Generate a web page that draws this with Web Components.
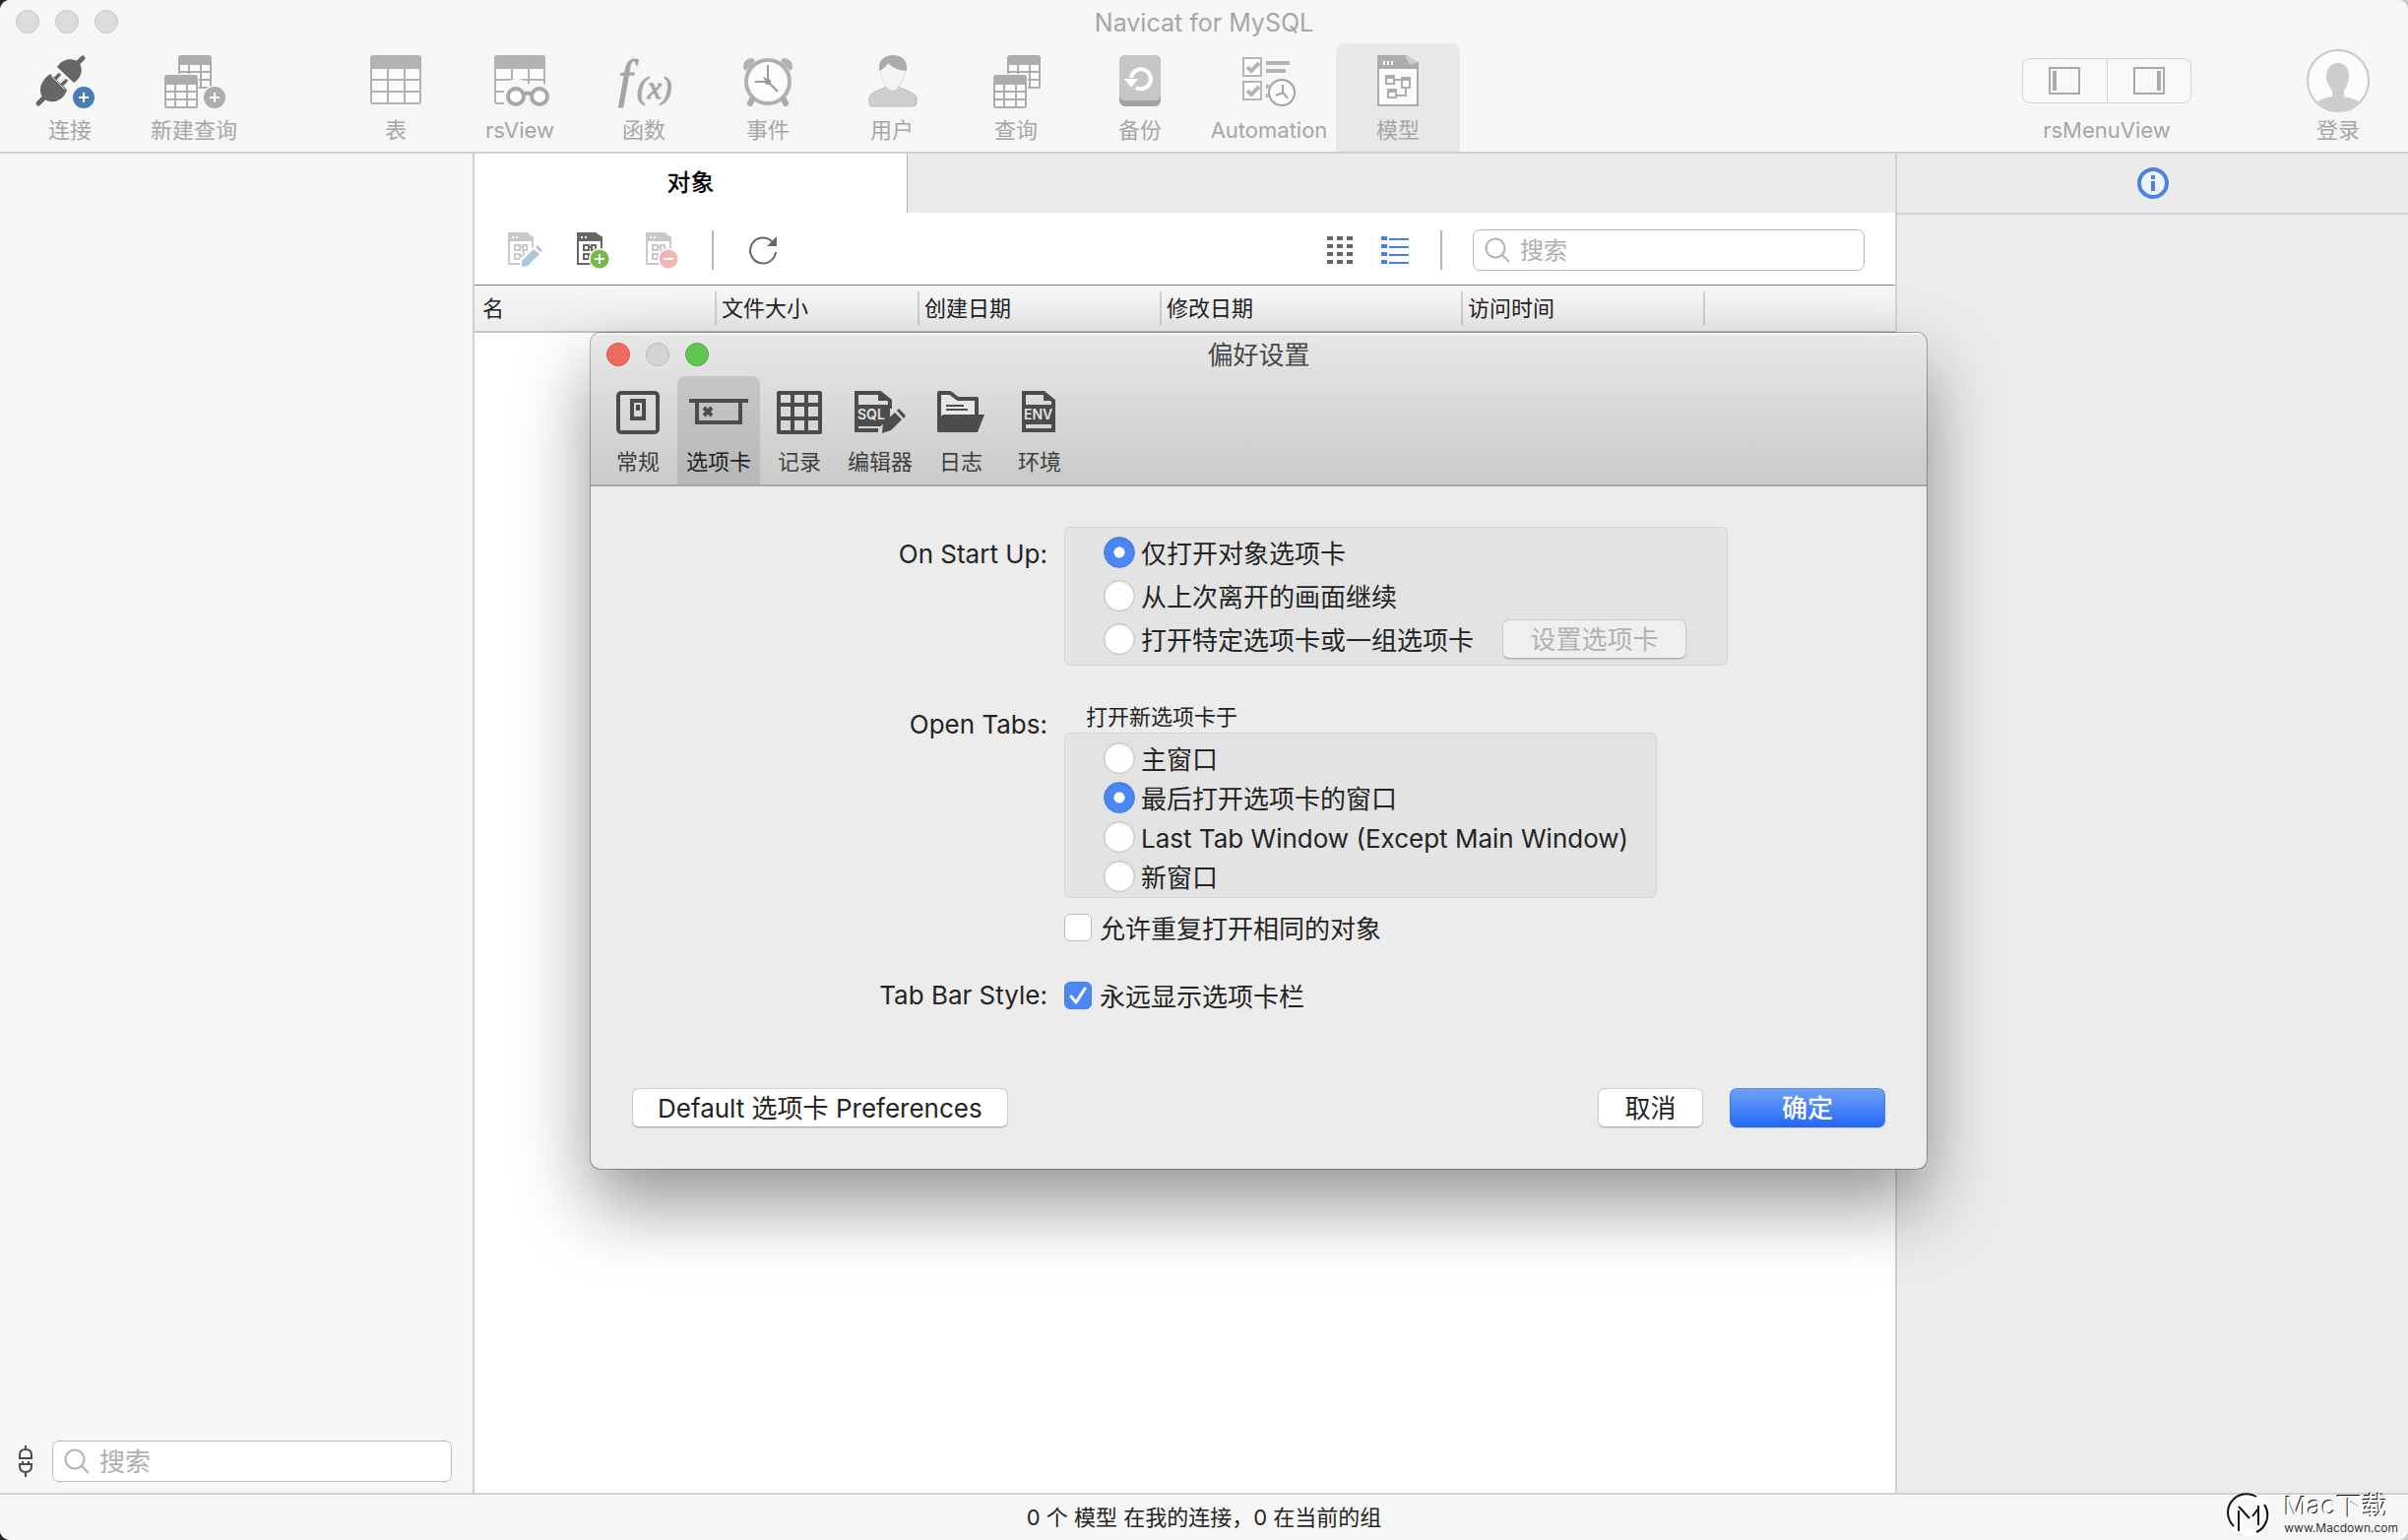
<!DOCTYPE html>
<html lang="zh-CN">
<head>
<meta charset="utf-8">
<title>Navicat for MySQL</title>
<style>
html, body { height: 100%; margin: 0; }
body {
  background: linear-gradient(90deg, #2a2024, #c9c9c9);
  font: 22px/28px Inter, "Noto Sans CJK SC", sans-serif;
  color: #242424;
}
</style>
</head>
<body>
<app-window></app-window>
<script>
const smallTable = (x, y) => `<g transform="translate(${x} ${y})"><rect width="34" height="34" rx="3" fill="#adadad"/><path fill="#fcfcfc" d="M2 10h8v6H2zM12 10h10v6H12zM24 10h8v6h-8zM2 18h8v6H2zM12 18h10v6H12zM24 18h8v6h-8zM2 26h8v6H2zM12 26h10v6H12zM24 26h8v6h-8z"/></g>`;
const doc = (c, extra) => `<path fill="#fff" stroke="${c}" stroke-width="2" d="M1 5h24v27H1z"/><path fill="${c}" d="M0 0h19l7 5v4H0z"/><path fill="#fff" d="M4 4h2v2H4zM8 4h2v2H8z"/><path fill="none" stroke="${c}" stroke-width="2" d="M7 13h5v5H7zM15 13h4v5h-4zM7 22h5v5H7zM12 15h3M12 24h4v-6"/>${extra}`;
const ICONS = {
  plug: [80, 52, `<g fill="#666" stroke="#666"><path stroke="none" d="M20 19L37 35C34 46 22 51 13 44C7 36 10 26 20 19Z"/><path stroke="none" d="M27 12C32 4 42 2 49 7C54 14 52 23 44 28Z"/><path stroke-width="5" stroke-linecap="round" d="M14 43L8 49M49 7L53 3"/><path stroke-width="3.5" stroke-linecap="round" d="M24 25L29 20M31 31L36 26"/></g><path stroke="#ddd" stroke-width="1" d="M21 21L35 35"/><circle cx="54" cy="43" r="11" fill="#4a7db5"/><path stroke="#fff" stroke-width="2" d="M49 43h10M54 38v10"/>`],
  newquery: [80, 52, smallTable(24, 0) + `<path fill="#f6f6f6" d="M9 19h36v35H9z"/>` + smallTable(10, 20) + `<circle cx="61" cy="43" r="12.5" fill="#f6f6f6"/><circle cx="61" cy="43" r="11" fill="#adadad"/><path stroke="#fff" stroke-width="2" d="M56 43h10M61 38v10"/>`],
  query: [80, 52, smallTable(31, 0) + `<path fill="#f6f6f6" d="M16 19h36v35H16z"/>` + smallTable(17, 20)],
  table: [80, 52, `<rect x="14" width="52" height="50" rx="3" fill="#b2b2b2"/><path fill="#fbfbfb" d="M16 14h15v10H16zM33 14h15v10H33zM50 14h14v10H50zM16 26h15v10H16zM33 26h15v10H33zM50 26h14v10H50zM16 38h15v10H16zM33 38h15v10H33zM50 38h14v10H50z"/>`],
  view: [80, 52, `<rect x="14" width="52" height="50" rx="3" fill="#b2b2b2"/><path fill="#fbfbfb" d="M16 14h15v10H16zM33 14h15v10H33zM50 14h14v10H50zM16 26h15v10H16zM33 26h15v10H33zM50 26h14v10H50zM16 38h15v10H16z"/><path fill="#f6f6f6" d="M24 36a13 13 0 0 1 24-6a13 13 0 0 1 18 0h6v22H24z"/><g fill="#fcfcfc" stroke="#a8a8a8" stroke-width="4"><circle cx="36" cy="42" r="8"/><circle cx="60" cy="42" r="8"/><path d="M44 40q4-3 8 0"/></g>`],
  func: [80, 52, `<text x="14" y="42" font-family="Liberation Serif" font-style="italic" font-size="52" fill="#a5a5a5" stroke="#a5a5a5" stroke-width="1">f</text><text x="33" y="44" font-family="Liberation Serif" font-style="italic" font-size="32" fill="#a5a5a5" stroke="#a5a5a5" stroke-width="1">(x)</text>`],
  clock: [80, 52, `<g fill="#b3b3b3"><path d="M15 13a9 9 0 0 1 10-10l2 3L17 16zM65 13A9 9 0 0 0 55 3l-2 3L63 16z"/><path stroke="#aaa" stroke-width="6" stroke-linecap="round" d="M25 43l-3 6M55 43l3 6"/></g><circle cx="40" cy="27" r="22" fill="#fdfdfd" stroke="#b0b0b0" stroke-width="4"/><path fill="none" stroke="#999" stroke-width="2" d="M40 10v17H27M36 23l14 14"/><circle cx="40" cy="27" r="3" fill="#999"/>`],
  user: [80, 52, `<path fill="#cfcfcf" stroke="#bbb" d="M17 50V43Q18 38 31 34L34 32H47L50 34Q63 38 65 43V50Q64 52 61 52H21Q17 52 17 50Z"/><path fill="#f4f4f4" stroke="#ddd" d="M29 14C28 24 33 31 35 33Q41 39 46 33C50 28 54 20 53 14L40 7Z"/><path fill="#ababab" d="M27 16C26 5 32 0 41 0C51 0 56 6 55 16Q44 16 36 8Q32 14 27 16Z"/>`],
  backup: [80, 52, `<rect x="19" width="42" height="52" rx="6" fill="#a3a3a3"/><rect x="19" width="42" height="46" rx="6" fill="#c6c6c6"/><path fill="none" stroke="#fff" stroke-width="4" d="M31 23A10 10 0 1 1 36 33"/><path fill="#fff" d="M24 24h14l-7 9z"/>`],
  auto: [80, 52, `<g fill="none" stroke="#b5b5b5" stroke-width="2"><path fill="#fff" d="M14 3h18v18H14zM14 27h18v18H14z"/><path stroke-width="4" d="M18 12l4 4 8-8M18 36l4 4 8-8M37 8h24M37 16h20M37 32h8M37 41h4"/></g><circle cx="53" cy="38" r="14.5" fill="#f6f6f6"/><circle cx="53" cy="38" r="13" fill="#fbfbfb" stroke="#a3a3a3" stroke-width="2"/><path fill="none" stroke="#a3a3a3" stroke-width="2" d="M54 30v8l-7 3M54 38l5 6"/>`],
  model: [80, 52, `<path fill="#fdfdfd" stroke="#acacac" stroke-width="2" d="M20 8h40v43H20z"/><path fill="#acacac" d="M19 0h30l12 9v5H19z"/><path fill="#ccc" d="M47 0l14 7-9 3z"/><path fill="#fff" d="M25 6h2v4h-2zM29 6h2v4h-2zM33 6h2v4h-2z"/><path fill="none" stroke="#acacac" stroke-width="2" d="M28 21h8v8h-8zM44 23h8v10h-8zM30 35h8v8h-8zM36 25h8M38 41h10v-8"/><path stroke="#acacac" stroke-width="4" d="M27 22h10M43 24h10M29 36h10"/>`],
  sideLeft: [32, 28, `<path fill="none" stroke="#aaa" stroke-width="2" d="M1 1h30v26H1z"/><path fill="#aaa" d="M4 4h4v20H4z"/>`],
  sideRight: [32, 28, `<path fill="none" stroke="#aaa" stroke-width="2" d="M1 1h30v26H1z"/><path fill="#aaa" d="M24 4h4v20h-4z"/>`],
  login: [64, 64, `<circle cx="32" cy="32" r="31" fill="#fcfcfc" stroke="#c8c8c8" stroke-width="2"/><path fill="#cdcdcd" d="M11 53Q16 50 26 48V42Q22 37 21 33Q19 30 20 27Q21 15 31 14Q42 14 43 26Q44 29 42 33Q41 38 38 42V48Q48 50 53 53Q44 63 32 63T11 53Z"/>`],
  info: [32, 32, `<circle cx="16" cy="16" r="14" fill="#eef3fb" stroke="#4d82e3" stroke-width="4"/><path fill="#4d82e3" d="M14 8h4v4h-4zM14 14h4v10h-4z"/>`],
  docEdit: [36, 36, `<g opacity=".35">${doc('#666', '')}</g><path fill="#fff" d="M12 27L30 11 36 19 22 36H12z"/><path fill="#aec6de" d="M14 29L26 17l6 5-12 12-6 1zM28 15l2-2 5 5-2 2z"/>`],
  docAdd: [36, 36, doc('#666', '<circle cx="23" cy="27" r="11" fill="#fff"/><circle cx="23" cy="27" r="9.5" fill="#76b947"/><path stroke="#fff" stroke-width="2" d="M18 27h10M23 22v10"/>')],
  docRemove: [36, 36, `<g opacity=".35">${doc('#666', '')}</g><circle cx="23" cy="27" r="11" fill="#fff"/><circle cx="23" cy="27" r="9.5" fill="#f3b5b3"/><path stroke="#fff" stroke-width="2" d="M18 27h10"/>`],
  refresh: [30, 30, `<path fill="none" stroke="#666" stroke-width="2" d="M28 17A13 13 0 1 1 24 6"/><path fill="#666" d="M29 1v10H19z"/>`],
  grid: [28, 28, `<path fill="none" stroke="#666" stroke-width="4" stroke-dasharray="6 4" d="M0 2h27M0 10h27M0 18h27M0 26h27"/>`],
  list: [28, 28, `<path fill="#4a80dd" d="M0 0h6v4H0zM8 2h20v2H8zM0 8h6v4H0zM8 10h20v2H8zM0 16h6v4H0zM8 18h20v2H8zM0 24h6v4H0zM8 26h20v2H8z"/>`],
  search: [26, 26, `<g fill="none" stroke="#b2b2b2" stroke-width="2"><circle cx="11" cy="11" r="9.5"/><path d="M18 18l7 7"/></g>`],
  link: [16, 32, `<path fill="none" stroke="#4a4a4a" stroke-width="2" d="M8 0v4M2 13V10Q2 4 8 4T14 10V13ZM1 19H15M2 19V21Q2 27 8 27T14 21V19M8 27V32M5 16v3M11 16v3"/>`],
  general: [60, 48, `<rect x="10" y="4" width="40" height="40" rx="3" fill="none" stroke="#4c4c4c" stroke-width="4"/><path fill="none" stroke="#4c4c4c" stroke-width="4" d="M24 12h12v18H24z"/><path fill="#4c4c4c" d="M28 16h4v6h-4z"/>`],
  tabs: [60, 48, `<path fill="none" stroke="#4c4c4c" stroke-width="4" d="M0 12h60M8 12v22h44V12M15 19l8 8M23 19l-8 8"/>`],
  records: [60, 48, `<path fill="none" stroke="#4c4c4c" stroke-width="4" stroke-linejoin="round" d="M9 4h42v40H9zM9 16h42M9 30h42M23 4v40M37 4v40"/>`],
  sql: [60, 48, `<path fill="none" stroke="#4c4c4c" stroke-width="4" d="M6 18V4h24l10 8v8M6 36v6h22"/><path fill="#4c4c4c" d="M28 2l12 10H28zM4 16h36v14L32 38H4z"/><text x="7" y="31" font-size="14" font-weight="600" fill="#e4e4e4">SQL</text><path stroke="#d6d6d6" stroke-width="14" d="M34 44L50 30"/><path fill="#4c4c4c" d="M33 35L45 24l7 7-11 11-9 3zM47 22l2-2 7 7-2 3z"/>`],
  log: [60, 48, `<path fill="#e6e6e6" stroke="#4c4c4c" stroke-width="4" stroke-linejoin="round" d="M8 42V4h11l8 6h19v18"/><path fill="#4c4c4c" d="M6 44l4-16q1-2 3-2h41l-7 18z"/><path stroke="#4c4c4c" stroke-width="2" d="M15 17h18M15 21h22"/>`],
  env: [60, 48, `<path fill="none" stroke="#4c4c4c" stroke-width="4" d="M14 18V4h20l10 8v8M14 34v8h30v-8"/><path fill="#4c4c4c" d="M34 2l12 10H34zM12 16h34v20H12z"/><text x="14" y="31" font-size="14" font-weight="600" fill="#e4e4e4">ENV</text>`]
};

const RESET = `*{box-sizing:border-box}button{font:inherit;color:inherit;background:none;border:0;padding:0;margin:0}`;

function define(name, css, html) {
  const template = document.createElement('template');
  customElements.define(name, class extends HTMLElement {
    constructor() {
      super();
      template.innerHTML ||= `<style>${RESET}${css}</style>${html}`;
      this.attachShadow({ mode: 'open' }).append(template.content.cloneNode(true));
    }
  });
}

customElements.define('ui-icon', class extends HTMLElement {
  connectedCallback() {
    if (this.shadowRoot) return;
    const [w, h, body] = ICONS[this.getAttribute('name')];
    this.attachShadow({ mode: 'open' }).innerHTML =
      `<style>:host{display:block;flex:none}svg{display:block;overflow:visible}</style><svg width="${w}" height="${h}" viewBox="0 0 ${w} ${h}" aria-hidden="true">${body}</svg>`;
  }
});

/* Toolbar entry: picture above, caption below */
define('tool-item', `
:host{display:block;min-width:126px}
:host([wide]){min-width:136px}
button{display:flex;flex-direction:column;align-items:center;width:100%;height:110px;color:#a6a6a6;line-height:24px;white-space:nowrap}
.art{height:76px;display:flex;align-items:center}
:host([selected]) button{background:#e8e8e8;border-radius:8px 8px 0 0}
`, `<button type="button"><span class="art"><slot name="icon"></slot></span><slot></slot></button>`);

define('view-switch', `
:host{display:flex;flex-direction:column;align-items:center;height:110px;color:#a6a6a6;line-height:24px}
.art{height:76px;display:flex;align-items:center}
.seg{display:flex;border:1px solid #d4d4d4;border-radius:8px;height:46px;width:172px;background:#f8f8f8}
button{flex:1;display:grid;place-items:center}
button+button{border-left:1px solid #d4d4d4}
`, `<div class="art"><div class="seg"><button type="button" aria-label="左侧栏"><ui-icon name="sideLeft"></ui-icon></button><button type="button" aria-label="右侧栏"><ui-icon name="sideRight"></ui-icon></button></div></div><slot></slot>`);

define('traffic-lights', `
:host{display:flex;gap:16px}
button{width:24px;height:24px;border-radius:50%;background:#dcdcdc;border:1px solid #c6c6c6}
:host([active]) button{background:#d4d4d4;border-color:#b8b8b8}
:host([active]) .close{background:#ed6a5f;border-color:#d5564c}
:host([active]) .zoom{background:#62c554;border-color:#51a844}
`, `<button class="close" type="button" aria-label="关闭"></button><button type="button" aria-label="最小化"></button><button class="zoom" type="button" aria-label="缩放"></button>`);

define('title-bar', `
:host{display:grid;grid-template-columns:1fr auto 1fr;align-items:center;height:44px;padding:0 16px}
.text{padding-top:2px}
`, `<slot name="lights"></slot><span class="text"><slot></slot></span>`);

define('main-toolbar', `
:host{display:block;height:156px;background:#f6f6f6;border-bottom:2px solid #d0d0d0;color:#a6a6a6}
title-bar{font-size:25px}
.row{display:flex;padding:0 8px}
.gap{width:79px}.fill{flex:1}
view-switch{margin-right:86px}
`, `<title-bar><traffic-lights slot="lights"></traffic-lights>Navicat for MySQL</title-bar>
<div class="row">
<tool-item><ui-icon slot="icon" name="plug"></ui-icon>连接</tool-item>
<tool-item><ui-icon slot="icon" name="newquery"></ui-icon>新建查询</tool-item>
<span class="gap"></span>
<tool-item><ui-icon slot="icon" name="table"></ui-icon>表</tool-item>
<tool-item><ui-icon slot="icon" name="view"></ui-icon>rsView</tool-item>
<tool-item><ui-icon slot="icon" name="func"></ui-icon>函数</tool-item>
<tool-item><ui-icon slot="icon" name="clock"></ui-icon>事件</tool-item>
<tool-item><ui-icon slot="icon" name="user"></ui-icon>用户</tool-item>
<tool-item><ui-icon slot="icon" name="query"></ui-icon>查询</tool-item>
<tool-item><ui-icon slot="icon" name="backup"></ui-icon>备份</tool-item>
<tool-item wide><ui-icon slot="icon" name="auto"></ui-icon>Automation</tool-item>
<tool-item selected><ui-icon slot="icon" name="model"></ui-icon>模型</tool-item>
<span class="fill"></span>
<view-switch>rsMenuView</view-switch>
<tool-item><ui-icon slot="icon" name="login"></ui-icon>登录</tool-item>
</div>`);

define('search-field', `
:host{display:block;min-width:0;font-size:26px}
label{display:flex;align-items:center;gap:10px;height:42px;padding:0 11px;background:#fff;border:1px solid #b9b9b9;border-radius:7px}
input{flex:1;min-width:0;border:0;outline:0;padding:2px 0 0;background:none;font:inherit;color:#242424}
input::placeholder{color:#b0b0b0;opacity:1}
`, `<label><ui-icon name="search"></ui-icon><input type="text" placeholder="搜索" aria-label="搜索"></label>`);

define('side-bar', `
:host{display:flex;align-items:flex-end;min-width:0;background:#f6f6f6;border-right:2px solid #d0d0d0}
.foot{flex:1;min-width:0;display:flex;align-items:center;gap:19px;padding:0 21px 11px 18px}
search-field{flex:1}
`, `<div class="foot"><ui-icon name="link"></ui-icon><search-field></search-field></div>`);

define('object-pane', `
:host{display:flex;flex-direction:column;background:#fff;min-width:0}
.tabs{display:flex;height:60px;background:#ebebeb}
.tab{width:440px;background:#fff;border-right:1px solid #b4b4b4;font-size:24px;font-weight:500;color:#000}
.bar{display:flex;align-items:center;height:73px;padding:2px 31px 0 34px}
.make,.look{display:flex;align-items:center;gap:34px}
.look{gap:27px;margin:0 32px 0 auto}
.bar i{width:2px;height:40px;background:#b4b4b4}
.make+i{margin:0 35px 0 31px}
.look+i{margin-right:31px}
search-field{width:398px;font-size:24px}
table{width:100%;table-layout:fixed;border-collapse:collapse;border-top:1px solid #7f7f7f;border-bottom:2px solid #c4c4c4;background:linear-gradient(#f7f7f7,#ececec)}
th{height:47px;padding:0;font-weight:400;text-align:left;color:#222}
th span{display:block;height:34px;line-height:34px;padding-left:5px;border-right:2px solid #cfcfcf}
th:first-child span{padding-left:8px}
th:last-child span{border:0}
`, `<div class="tabs"><button class="tab" type="button">对象</button></div>
<div class="bar">
<div class="make">
<button type="button" aria-label="设计模型"><ui-icon name="docEdit"></ui-icon></button>
<button type="button" aria-label="新建模型"><ui-icon name="docAdd"></ui-icon></button>
<button type="button" aria-label="删除模型"><ui-icon name="docRemove"></ui-icon></button>
</div>
<i></i>
<button type="button" aria-label="刷新"><ui-icon name="refresh"></ui-icon></button>
<div class="look">
<button type="button" aria-label="图标视图"><ui-icon name="grid"></ui-icon></button>
<button type="button" aria-label="列表视图"><ui-icon name="list"></ui-icon></button>
</div>
<i></i>
<search-field></search-field>
</div>
<table><colgroup><col style="width:246px"><col style="width:206px"><col style="width:246px"><col style="width:306px"><col style="width:246px"><col></colgroup>
<thead><tr><th><span>名</span></th><th><span>文件大小</span></th><th><span>创建日期</span></th><th><span>修改日期</span></th><th><span>访问时间</span></th><th><span></span></th></tr></thead></table>`);

define('info-pane', `
:host{display:block;background:#ececec;border-left:2px solid #d2d2d2}
header{display:grid;place-items:center;height:62px;background:#ebebeb;border-bottom:2px solid #d2d2d2}
`, `<header><button type="button" aria-label="信息"><ui-icon name="info"></ui-icon></button></header>`);

define('status-bar', `
:host{display:grid;place-items:center;height:48px;border-top:2px solid #d0d0d0;background:#f6f6f6}
`, `<slot></slot>`);

define('site-mark', `
:host{display:flex;align-items:center;gap:14px;color:#fff}
svg{display:block}
.name{font-size:26px;line-height:28px;text-shadow:-1px -1px 0 #111}
.url{font-size:12px;line-height:16px;color:#333}
`, `<svg width="44" height="44" viewBox="0 0 44 44" aria-hidden="true"><g fill="none"><path stroke="#fff" stroke-width="6" d="M22 3a19 19 0 1 0 1 0"/><path stroke="#111" stroke-width="2" d="M30 4A19 19 0 0 0 7 34M38 12A19 19 0 0 1 30 40"/><path stroke="#fff" stroke-width="5" d="M14 36V14l10 12 10-12v18"/><path stroke="#111" stroke-width="2" d="M12 39V18M12 14l11 12M26 24l6-8M32 13v20"/></g></svg>
<div><div class="name">Mac下载</div><div class="url">www.Macdown.com</div></div>`);

define('pref-tab', `
:host{display:block}
button{display:flex;flex-direction:column;align-items:center;min-width:80px;height:110px;padding:13px 9px 0;gap:12px;line-height:28px;color:#404040}
:host([selected]) button{background:linear-gradient(#c6c6c6,#b8b8b8);border-radius:8px 8px 0 0;color:#222}
`, `<button type="button"><slot name="icon"></slot><slot></slot></button>`);

define('pref-row', `
:host{display:grid;grid-template-columns:464px 1fr;column-gap:17px;font-size:26px;line-height:32px}
.cap{text-align:right}
:host([drop="box"]) .cap{padding-top:12px}
:host([drop="title"]) .cap{padding-top:7px}
`, `<div class="cap"><slot name="caption"></slot></div><div><slot></slot></div>`);

define('push-button', `
:host{display:inline-block;font-size:26px}
button{height:40px;line-height:38px;padding:1px 25px 0;width:100%;white-space:nowrap;background:#fff;border-radius:7px;border:1px solid #cdcdcd;border-bottom-color:#b0b0b0;box-shadow:0 1px 1px rgba(0,0,0,.12);color:#242424}
:host([primary]) button{color:#fff;font-weight:500;border-color:#5a8fee #3c78ef #2a62e0;background:linear-gradient(#6ea1f5,#2568f6)}
:host([disabled]) button{color:#b2b2b2;background:#efefef}
`, `<button type="button"><slot></slot></button>`);

define('pref-dialog', `
:host{display:block;border-radius:10px;background:#ececec;box-shadow:0 0 0 1px rgba(0,0,0,.28),0 36px 76px rgba(0,0,0,.42);overflow:hidden}
.head{background:linear-gradient(#e8e8e8,#cacaca);border-bottom:2px solid #a6a6a6;box-shadow:inset 0 2px 0 #f4f4f4}
title-bar{font-size:26px;color:#484848}
nav{display:flex;padding:0 8px}
form{display:grid;row-gap:37px;padding-top:41px}
label{display:flex;align-items:center;gap:6px;white-space:nowrap}
label.check{gap:8px}
.t{padding-top:3px}
.box{border:1px solid #d6d6d6;border-radius:6px;background:#e3e3e3;padding:3px 0 4px 39px}
.start{width:674px}.start .line{height:44px;display:flex;align-items:center;gap:29px}
.open{width:602px;padding:5px 0 1px 39px;margin-bottom:14px}.open label{height:40px}
.sub{font-size:22px;line-height:31px;padding-left:22px}
input{appearance:none;margin:0;flex:none;background:#fff;border:1px solid #bcbcbc}
input[type=radio]{width:32px;height:32px;border-radius:50%;box-shadow:inset 0 1px 3px rgba(0,0,0,.12)}
input[type=radio]:checked{border-color:#4480ee;background:radial-gradient(circle,#fff 5px,#4b88f6 6px)}
input[type=checkbox]{width:28px;height:28px;border-radius:6px}
.check{height:32px}
.tick{display:grid}.tick>*{grid-area:1/1}
.tick svg{pointer-events:none}
input[type=checkbox]:checked{background:#4b88f6;border-color:#4480ee}
footer{display:flex;gap:27px;padding:78px 42px 42px}
footer .fill{flex:1;margin-right:-27px}
.choose{width:187px}.cancel{width:107px}.ok{width:158px}
`, `<div class="head"><title-bar><traffic-lights slot="lights" active></traffic-lights>偏好设置</title-bar>
<nav>
<pref-tab><ui-icon slot="icon" name="general"></ui-icon>常规</pref-tab>
<pref-tab selected><ui-icon slot="icon" name="tabs"></ui-icon>选项卡</pref-tab>
<pref-tab><ui-icon slot="icon" name="records"></ui-icon>记录</pref-tab>
<pref-tab><ui-icon slot="icon" name="sql"></ui-icon>编辑器</pref-tab>
<pref-tab><ui-icon slot="icon" name="log"></ui-icon>日志</pref-tab>
<pref-tab><ui-icon slot="icon" name="env"></ui-icon>环境</pref-tab>
</nav></div>
<form>
<pref-row drop="box"><span slot="caption">On Start Up:</span>
<div class="box start" role="radiogroup" aria-label="On Start Up">
<div class="line"><label><input type="radio" name="start" checked><span class="t">仅打开对象选项卡</span></label></div>
<div class="line"><label><input type="radio" name="start"><span class="t">从上次离开的画面继续</span></label></div>
<div class="line"><label><input type="radio" name="start"><span class="t">打开特定选项卡或一组选项卡</span></label><push-button class="choose" disabled>设置选项卡</push-button></div>
</div></pref-row>
<pref-row drop="title"><span slot="caption">Open Tabs:</span>
<div class="sub">打开新选项卡于</div>
<div class="box open" role="radiogroup" aria-label="打开新选项卡于">
<label><input type="radio" name="open"><span class="t">主窗口</span></label>
<label><input type="radio" name="open" checked><span class="t">最后打开选项卡的窗口</span></label>
<label><input type="radio" name="open"><span class="t">Last Tab Window (Except Main Window)</span></label>
<label><input type="radio" name="open"><span class="t">新窗口</span></label>
</div>
<label class="check"><input type="checkbox"><span class="t">允许重复打开相同的对象</span></label></pref-row>
<pref-row><span slot="caption">Tab Bar Style:</span>
<label class="check"><span class="tick"><input type="checkbox" checked><svg width="28" height="28" viewBox="0 0 28 28" aria-hidden="true"><path d="M7 15l5 6 9-14" fill="none" stroke="#fff" stroke-width="3" stroke-linecap="round" stroke-linejoin="round"/></svg></span><span class="t">永远显示选项卡栏</span></label></pref-row>
</form>
<footer><push-button>Default 选项卡 Preferences</push-button><span class="fill"></span><push-button class="cancel">取消</push-button><push-button class="ok" primary>确定</push-button></footer>`);

define('app-window', `
:host{display:flex;flex-direction:column;height:100vh;position:relative;border-radius:10px;overflow:hidden;background:#f6f6f6}
main{flex:1;display:grid;grid-template-columns:482px 1fr 521px;min-height:0}
pref-dialog{position:absolute;left:600px;top:338px;width:1357px}
site-mark{position:absolute;right:10px;bottom:4px}
`, `<main-toolbar></main-toolbar>
<main><side-bar></side-bar><object-pane></object-pane><info-pane></info-pane></main>
<status-bar>0 个 模型 在我的连接，0 在当前的组</status-bar>
<pref-dialog role="dialog" aria-label="偏好设置"></pref-dialog>
<site-mark></site-mark>`);
</script>
</body>
</html>
